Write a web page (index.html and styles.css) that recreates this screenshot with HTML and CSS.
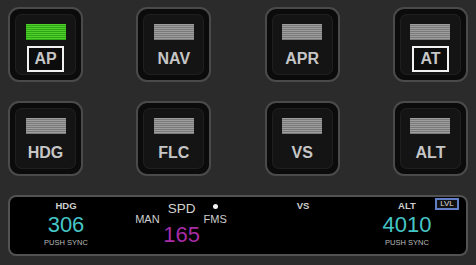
FILE: index.html
```html
<!DOCTYPE html>
<html lang="en">
<head>
    <meta charset="UTF-8">
    <title>Autopilot</title>
    <link rel="stylesheet" href="styles.css">
</head>
<body>

    <div class="keys">
        <div class="key"><div class="face"><span class="bar on"></span><span class="name boxed">AP</span></div></div>
        <div class="key"><div class="face"><span class="bar"></span><span class="name">NAV</span></div></div>
        <div class="key"><div class="face"><span class="bar"></span><span class="name">APR</span></div></div>
        <div class="key"><div class="face"><span class="bar"></span><span class="name boxed">AT</span></div></div>

        <div class="key"><div class="face"><span class="bar"></span><span class="name">HDG</span></div></div>
        <div class="key"><div class="face"><span class="bar"></span><span class="name">FLC</span></div></div>
        <div class="key"><div class="face"><span class="bar"></span><span class="name">VS</span></div></div>
        <div class="key"><div class="face"><span class="bar"></span><span class="name">ALT</span></div></div>
    </div>

    <div class="display">
        <div class="col">
            <span class="tag">HDG</span>
            <span class="value">306</span>
            <span class="hint">PUSH SYNC</span>
        </div>

        <div class="col speed">
            <span class="mode man">MAN</span>
            <div class="spd">
                <span class="spd-title">SPD</span>
                <span class="value magenta">165</span>
            </div>
            <div class="fms">
                <span class="dot"></span>
                <span class="mode">FMS</span>
            </div>
        </div>

        <div class="col">
            <span class="tag">VS</span>
        </div>

        <div class="col">
            <span class="tag">ALT</span>
            <span class="value">4010</span>
            <span class="hint">PUSH SYNC</span>
        </div>

        <span class="lvl">LVL</span>
    </div>

</body>
</html>
```

FILE: styles.css
```css
/* painel do piloto automatico */
body {
    margin: 0;
    padding: 7px 8px 0 8px;
    width: 476px;
    height: 265px;
    box-sizing: border-box;
    overflow: hidden;
    background-color: #2b2b2b;
    font-family: "Liberation Sans", Arial, sans-serif;
}

.keys {
    display: grid;
    grid-template-columns: repeat(4, 75px);
    justify-content: space-between;
    row-gap: 19px;
}

.key {
    width: 75px;
    height: 75px;
    box-sizing: border-box;
    border: 2px solid #4a4a4a;
    border-radius: 11px;
    background-color: #0b0b0b;
    padding: 5px;
}

.face {
    height: 100%;
    box-sizing: border-box;
    border-radius: 7px;
    background-color: #141414;
    box-shadow: inset 0 0 0 1px #1f1f1f;
    padding-top: 10px;
    display: flex;
    flex-direction: column;
    align-items: center;
}

.bar {
    display: block;
    width: 40px;
    height: 16px;
    background: repeating-linear-gradient(to bottom, #9e9e9e 0 1px, #7a7a7a 1px 2px);
}

.bar.on {
    background: repeating-linear-gradient(to bottom, #4fd12a 0 1px, #2ea617 1px 2px);
}

.name {
    display: block;
    margin-top: 6px;
    height: 26px;
    line-height: 26px;
    font-size: 16px;
    font-weight: bold;
    color: #c6c6c6;
    text-align: center;
}

.name.boxed {
    width: 37px;
    box-sizing: border-box;
    border: 2px solid #f2f2f2;
    line-height: 22px;
    background-color: #0c0c0c;
}

/* mostrador de baixo */
.display {
    position: relative;
    margin-top: 19px;
    height: 61px;
    box-sizing: border-box;
    border: 2px solid #525252;
    border-radius: 8px;
    background-color: #000;
    padding-top: 3px;
    display: grid;
    grid-template-columns: 112px 118px 126px 82px;
}

.col {
    display: flex;
    flex-direction: column;
    align-items: center;
}

.tag {
    font-size: 9.5px;
    line-height: 11px;
    font-weight: bold;
    color: #cfcfcf;
}

.value {
    margin-top: 3px;
    font-size: 22px;
    line-height: 22px;
    color: #45c6c6;
}

.hint {
    margin-top: 2px;
    font-size: 7.5px;
    line-height: 9px;
    color: #b9b9b9;
}

.speed {
    flex-direction: row;
    justify-content: center;
    align-items: flex-start;
    gap: 4px;
}

.mode {
    font-size: 11px;
    line-height: 13px;
    color: #cfcfcf;
}

.man {
    margin-top: 12.5px;
}

.spd {
    width: 36px;
    display: flex;
    flex-direction: column;
    align-items: center;
}

.spd-title {
    margin-top: 1px;
    font-size: 13.5px;
    line-height: 15px;
    color: #d2d2d2;
}

.spd .value {
    margin-top: 8px;
}

.magenta {
    color: #a82ba8;
}

.fms {
    display: flex;
    flex-direction: column;
    align-items: center;
}

.dot {
    margin-top: 4px;
    width: 5px;
    height: 5px;
    border-radius: 50%;
    background-color: #f4f4f4;
}

.fms .mode {
    margin-top: 3.5px;
}

.lvl {
    position: absolute;
    top: 1px;
    right: 7px;
    width: 24px;
    height: 12px;
    box-sizing: border-box;
    border: 2px solid #5f80c6;
    background-color: #111;
    font-size: 8px;
    line-height: 8px;
    color: #dcdcdc;
    text-align: center;
}
```
